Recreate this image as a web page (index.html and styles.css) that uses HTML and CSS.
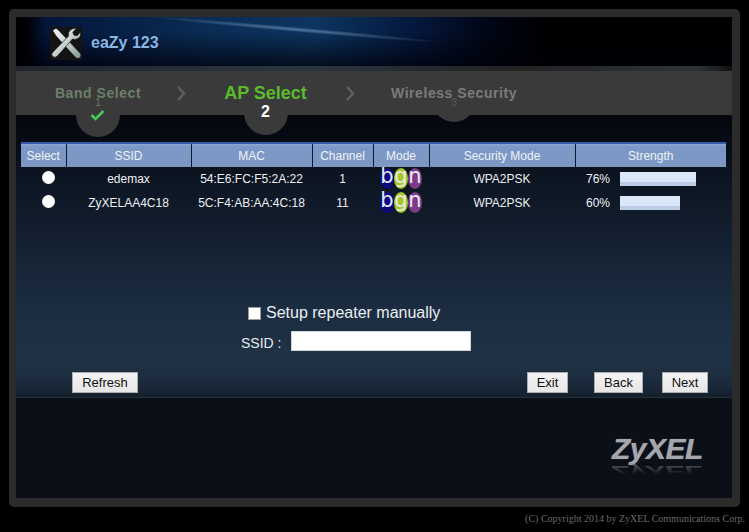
FILE: index.html
```html
<!DOCTYPE html>
<html lang="en">
<head>
<meta charset="utf-8">
<title>eaZy 123</title>
<link rel="stylesheet" href="styles.css">
</head>
<body>
<div class="frame">
  <header class="banner">
    <svg class="tools" viewBox="0 0 32 33" width="32" height="33" aria-hidden="true">
      <defs>
        <linearGradient id="steel" x1="0" y1="0" x2="1" y2="1">
          <stop offset="0" stop-color="#f4f6f6"/>
          <stop offset="0.55" stop-color="#c3cccc"/>
          <stop offset="1" stop-color="#7f9291"/>
        </linearGradient>
      </defs>
      <rect width="32" height="33" fill="#141414"/>
      <path d="M3 3.5 L6 1.5 L9 4 L17.5 13 L30 26.5 Q31.5 29 29.5 30.5 Q27.5 32 25.5 30 L13.5 17 L6 8.5 Z" fill="url(#steel)"/>
      <path d="M30.5 5 Q31.5 10 27 12 Q24.5 12.8 22.5 12 L7.5 29 Q5 31.5 2.8 29.5 Q0.5 27.5 3 25 L18.5 9 Q17.5 5 21 2.5 Q23.5 1 26.5 1.2 L22.8 5.2 L24 8.2 L27 8.8 Z" fill="url(#steel)" stroke="#141414" stroke-width="0.7"/>
    </svg>
    <div class="product">eaZy 123</div>
  </header>
  <div class="divider"></div>
  <nav class="steps">
    <div class="step step-one">
      <span class="step-label">Band Select</span>
      <div class="bubble"><span class="bubble-num">1</span>
        <svg class="check" viewBox="0 0 15 12" width="15" height="12" aria-hidden="true"><path d="M1.5 6 L5.5 10 L13.5 2" fill="none" stroke="#46c85a" stroke-width="2.6"/></svg>
      </div>
    </div>
    <svg class="chev chev-one" viewBox="0 0 9 15" width="9" height="15" aria-hidden="true"><path d="M1 1 L7 7.5 L1 14" fill="none" stroke="#5f5f5f" stroke-width="2.4"/></svg>
    <div class="step step-two">
      <span class="step-label">AP Select</span>
      <div class="bubble"><span class="bubble-now">2</span></div>
    </div>
    <svg class="chev chev-two" viewBox="0 0 9 15" width="9" height="15" aria-hidden="true"><path d="M1 1 L7 7.5 L1 14" fill="none" stroke="#5f5f5f" stroke-width="2.4"/></svg>
    <div class="step step-three">
      <span class="step-label">Wireless Security</span>
      <div class="bubble bubble-later"><span class="bubble-num">3</span></div>
    </div>
  </nav>
  <main class="content">
    <table class="aps">
      <colgroup>
        <col class="c-sel"><col class="c-ssid"><col class="c-mac"><col class="c-chan"><col class="c-mode"><col class="c-sec"><col class="c-str">
      </colgroup>
      <thead>
        <tr><th>Select</th><th>SSID</th><th>MAC</th><th>Channel</th><th>Mode</th><th>Security Mode</th><th>Strength</th></tr>
      </thead>
      <tbody>
        <tr>
          <td><input class="radio" type="radio" name="ap"></td>
          <td>edemax</td>
          <td>54:E6:FC:F5:2A:22</td>
          <td>1</td>
          <td><div class="modes"><span class="m m-b">b</span><span class="m m-g">g</span><span class="m m-n">n</span></div></td>
          <td>WPA2PSK</td>
          <td><div class="strength"><span class="pct">76%</span><span class="bar" style="width:76px"></span></div></td>
        </tr>
        <tr>
          <td><input class="radio" type="radio" name="ap"></td>
          <td>ZyXELAA4C18</td>
          <td>5C:F4:AB:AA:4C:18</td>
          <td>11</td>
          <td><div class="modes"><span class="m m-b">b</span><span class="m m-g">g</span><span class="m m-n">n</span></div></td>
          <td>WPA2PSK</td>
          <td><div class="strength"><span class="pct">60%</span><span class="bar" style="width:60px"></span></div></td>
        </tr>
      </tbody>
    </table>
    <form class="manual">
      <label class="manual-check"><input class="box" type="checkbox">Setup repeater manually</label>
      <div class="manual-ssid"><label class="ssid-label" for="ssid">SSID :</label><input class="ssid-input" id="ssid" type="text"></div>
    </form>
    <div class="actions">
      <button class="btn btn-refresh" type="button">Refresh</button>
      <div class="actions-right">
        <button class="btn btn-exit" type="button">Exit</button>
        <button class="btn btn-back" type="button">Back</button>
        <button class="btn btn-next" type="button">Next</button>
      </div>
    </div>
  </main>
  <footer class="foot">
    <div class="logo">
      <span class="logo-text">ZyXEL</span>
      <span class="logo-shadow" aria-hidden="true">ZyXEL</span>
    </div>
  </footer>
</div>
<p class="copyright">(C) Copyright 2014 by ZyXEL Communications Corp.</p>
</body>
</html>
```
FILE: styles.css
```css
* { box-sizing: border-box; }
html, body { margin: 0; padding: 0; background: #000; }
body { width: 749px; height: 532px; overflow: hidden; font-family: "Liberation Sans", Arial, sans-serif; color: #e6e9ee; }

.frame {
  margin: 9px 0 0 9px;
  width: 731px;
  height: 498px;
  background: #0b1018;
  border-style: solid;
  border-color: #2b2b2b;
  border-width: 8px 8px 9px 7px;
  border-radius: 5px;
  display: flex;
  flex-direction: column;
}

.banner {
  height: 49px;
  flex: none;
  position: relative;
  overflow: hidden;
  display: flex;
  align-items: center;
  padding: 3px 0 0 34px;
  gap: 9px;
  background:
    linear-gradient(180deg, rgba(0,0,0,0) 30%, rgba(0,0,8,.75) 100%),
    linear-gradient(90deg, #000 0, #000 10px, #04163a 30px, #0a2c55 190px, #0c3560 300px, #04173c 400px, #010616 470px, #000 530px);
}
.banner::before {
  content: "";
  position: absolute;
  left: 130px;
  top: 10px;
  width: 300px;
  height: 5px;
  background: radial-gradient(ellipse at center, rgba(150,185,215,.5), rgba(150,185,215,0) 72%);
  transform: rotate(5deg);
}
.tools { flex: none; position: relative; }
.product { position: relative; font-size: 16px; font-weight: bold; color: #8ab6e2; }

.divider {
  height: 5px;
  flex: none;
  background: linear-gradient(90deg, #20262c, #2a3540 40%, #222 70%, #2c3338 95%, #111);
}

.steps {
  height: 44px;
  flex: none;
  background: #3a3a3a;
  display: flex;
  align-items: center;
  position: relative;
  z-index: 1;
  padding: 0 0 0 40px;
}
.step { position: relative; display: flex; justify-content: center; font-weight: bold; white-space: nowrap; }
.step-label { position: relative; z-index: 1; }
.step-one { width: 84px; font-size: 14px; letter-spacing: .55px; color: #6b8068; }
.step-two { width: 83px; font-size: 18px; color: #5abb2c; }
.step-three { width: 122px; font-size: 14px; letter-spacing: .55px; color: #7b7b7b; }
.chev { flex: none; }
.chev-one { margin: 0 38px 0 37px; }
.chev-two { margin: 0 38px 0 39px; }

.bubble {
  position: absolute;
  left: 50%;
  top: 9px;
  width: 44px;
  height: 44px;
  margin-left: -22px;
  border-radius: 50%;
  background: #3a3a3a;
  text-align: center;
}
.step-one .bubble, .step-two .bubble { top: 8px; }
.bubble-later { top: -7px !important; }
.bubble-num {
  position: absolute;
  left: 0;
  right: 0;
  top: 3px;
  font-size: 11px;
  font-weight: normal;
  letter-spacing: 0;
  color: #68786a;
}
.bubble-later .bubble-num { top: 18px; color: #5a5a5a; }
.check { position: absolute; left: 14px; top: 16px; }
.bubble-now { position: absolute; left: 0; right: 0; top: 12px; font-size: 16px; color: #fff; }

.content {
  height: 283px;
  flex: none;
  padding: 27px 6px 0 5px;
  background: linear-gradient(180deg, #03060c 0, #0c1421 60px, #1b2c40 190px, #203246 245px, #1c2c3e 265px, #141e2b 283px);
  border-bottom: 1px solid #26313c;
  display: flex;
  flex-direction: column;
}

.aps { width: 705px; table-layout: fixed; border-collapse: collapse; font-size: 12px; flex: none; }
.c-sel { width: 45px; } .c-ssid { width: 125px; } .c-mac { width: 121px; } .c-chan { width: 61px; }
.c-mode { width: 56px; } .c-sec { width: 146px; } .c-str { width: 151px; }
.aps th {
  height: 24px;
  padding: 0;
  font-weight: normal;
  color: #eef2f7;
  border-left: 1px solid #0c1a2e;
  border-top: 2px solid #345ca8;
  background: linear-gradient(180deg, #8ba6d0 0, #7a97c6 3px, #7e98c2 100%);
}
.aps th:first-child { border-left: 0; }
.aps td { height: 24px; padding: 0; text-align: center; color: #eceff3; }

.radio {
  appearance: none;
  display: block;
  width: 13px;
  height: 13px;
  margin: -4px 0 0 21px;
  border-radius: 50%;
  background: #fff;
}
.modes { display: flex; padding-left: 7px; margin-top: -2px; }
.m {
  width: 14px;
  height: 21px;
  margin-right: 0;
  border-radius: 50%;
  font-size: 21px;
  line-height: 17px;
  text-align: center;
  font-family: "DejaVu Sans", sans-serif;
  color: #e8e8f4;
}
.m-b { background: #0a0a80; }
.m-g { background: #a4c81e; }
.m-n { background: #7d3a86; }
.strength { display: flex; align-items: center; padding-left: 11px; gap: 9px; }
.pct { width: 25px; text-align: left; }
.bar {
  display: block;
  height: 14px;
  background: linear-gradient(180deg, #dde9f9 0, #d8e5f7 70%, #bccde6 72%, #bccde6 100%);
}

.manual { margin: 88px 0 0; flex: none; }
.manual-check { display: flex; align-items: center; padding-left: 227px; font-size: 16px; height: 20px; color: #e9eef2; }
.box { appearance: none; width: 13px; height: 13px; margin: 0 5px 0 0; background: #fff; border: 1px solid #9a9a9a; flex: none; }
.manual-ssid { display: flex; align-items: center; margin-top: 8px; padding-left: 220px; }
.ssid-label { width: 50px; font-size: 14px; color: #e6eaee; padding-top: 3px; }
.ssid-input { width: 180px; height: 20px; padding: 0; border: 1px solid #cfd6dc; background: #fff; }

.actions { display: flex; justify-content: space-between; margin-top: 21px; padding: 0 18px 0 51px; flex: none; }
.actions-right { display: flex; }
.btn {
  height: 21px;
  padding: 0;
  font: 13px "Liberation Sans", Arial, sans-serif;
  color: #111;
  border: 1px solid #a9adb0;
  background: linear-gradient(180deg, #f4f4f4, #e6e6e6);
}
.btn-refresh { width: 66px; }
.btn-exit { width: 41px; }
.btn-back { width: 49px; margin-left: 26px; }
.btn-next { width: 46px; margin-left: 19px; }

.foot { flex: 1; position: relative; background: #0b1018; }
.logo { position: absolute; right: 28px; top: 36px; width: 92px; height: 42px; }
.logo-text, .logo-shadow {
  position: absolute;
  left: 0;
  top: 0;
  font-size: 30px;
  line-height: 30px;
  font-weight: bold;
  font-style: italic;
  letter-spacing: -0.5px;
  white-space: nowrap;
}
.logo-text {
  color: #a5a7ac;
  text-shadow: 0 0 1px #72747a;
}
.logo-shadow {
  top: 22px;
  color: #8b8d92;
  transform: scaleY(-.55);
  -webkit-mask-image: linear-gradient(0deg, rgba(0,0,0,.55) 60%, transparent 85%);
  mask-image: linear-gradient(180deg, transparent 25%, rgba(0,0,0,.5) 90%);
}

.copyright {
  position: absolute;
  top: 513px;
  right: 4px;
  margin: 0;
  font: 10px "Liberation Serif", "Times New Roman", serif;
  color: #6a6a6a;
  white-space: nowrap;
}
```
